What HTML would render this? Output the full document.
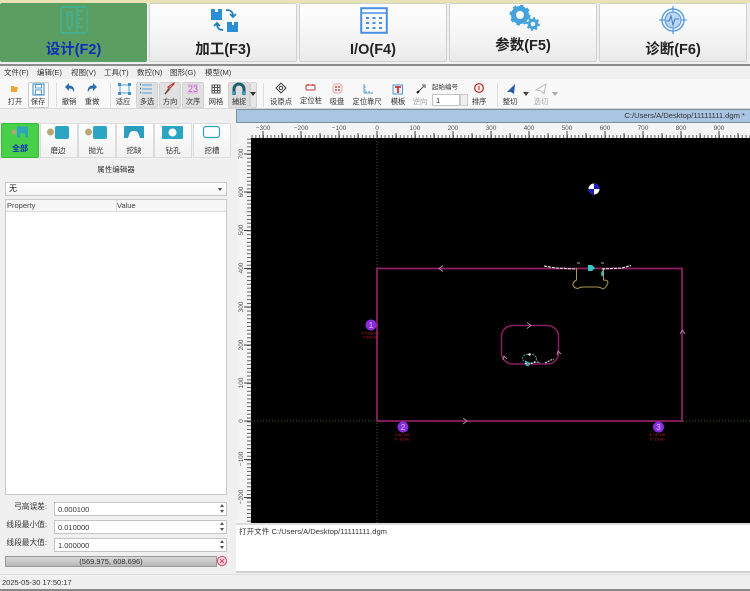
<!DOCTYPE html>
<html><head><meta charset="utf-8">
<style>
html,body{margin:0;padding:0;width:750px;height:591px;overflow:hidden;background:#f0f0f0;font-family:"Liberation Sans","Noto Sans CJK SC",sans-serif;color:#222}
.a{position:absolute;white-space:nowrap}
.tab{position:absolute;top:3px;height:59px;width:148px;background:linear-gradient(#ffffff,#f2f2f2 70%,#e9e9e9);border:1px solid #d0d0d0;box-sizing:border-box;border-radius:2px}
.tl{position:absolute;left:0;right:0;text-align:center;font-size:14.5px;font-weight:bold;color:#222;top:37px;line-height:18px}
.tab svg{position:absolute}
.m{position:absolute;top:67px;font-size:7.5px;line-height:12px;color:#333}
.t{position:absolute;top:96px;font-size:7.3px;line-height:11px;color:#333;text-align:center;transform:translateX(-50%);white-space:nowrap}
.ti{position:absolute}
.b{position:absolute;top:82px;height:26px;background:#e0e0e0;border:1px solid #d2d2d2;box-sizing:border-box;border-radius:2px}
.sb{position:absolute;top:123px;width:38px;height:35px;background:linear-gradient(#fff,#f1f1f1);border:1px solid #dcdcdc;box-sizing:border-box}
.sl{position:absolute;top:145px;font-size:7.5px;line-height:11px;color:#333;transform:translateX(-50%);white-space:nowrap}
.inp{position:absolute;left:54px;width:168px;height:12px;background:#fff;border:1px solid #c4c4c4;font-size:7.5px;line-height:13px;color:#333;padding-left:3px}
.lab{position:absolute;font-size:7.7px;line-height:11px;color:#333;right:703px;white-space:nowrap}
</style></head><body>

<div class="a" style="left:0;top:0;width:750px;height:3px;background:#e8e2b4"></div>
<div class="a" style="left:0;top:3px;width:750px;height:60px;background:#efefef"></div>

<div class="tab" style="left:0;width:147px;background:#5a9e62;border-color:#5a9e62">
 <svg style="left:58px;top:1px" width="30" height="30" viewBox="0 0 30 30" fill="none" stroke="#3fb39a" stroke-width="1.4"><rect x="2" y="2" width="26" height="26" rx="2"/><path d="M8 7h5v13l-2.5 5-2.5-5zM8 10h5M18 2v26M18 6h5M18 10h3M18 14h5M18 18h3M18 22h5"/></svg>
 <div class="tl" style="color:#1030b8">设计(F2)</div></div>
<div class="tab" style="left:149px">
 <svg style="left:60px;top:2px" width="30" height="30" viewBox="0 0 30 30"><path d="M1 3h4v3h3V3h4v11H1z" fill="#2a8fd4"/><path d="M20 16h2v3h2v-3h4v10H17V16z" fill="#2a8fd4"/><path d="M16 4c4 0 7 1 7 6M20 8l3 3 3-3M13 24c-4 0-6-2-6-6M4 20l3-3 3 3" fill="none" stroke="#1e7cb8" stroke-width="1.7"/></svg>
 <div class="tl">加工(F3)</div></div>
<div class="tab" style="left:299px">
 <svg style="left:60px;top:3px" width="28" height="27" viewBox="0 0 28 27" fill="none"><rect x="1.2" y="1.2" width="25.6" height="24.6" stroke="#4a90e2" stroke-width="2"/><path d="M1 6h26" stroke="#4a90e2" stroke-width="1.5"/><path d="M6 10h3v2H6zM12.5 10h3v2h-3zM19 10h3v2h-3zM6 15h3v2H6zM12.5 15h3v2h-3zM19 15h3v2h-3zM6 20h3v2H6zM12.5 20h3v2h-3zM19 20h3v2h-3z" fill="#4a90e2"/></svg>
 <div class="tl">I/O(F4)</div></div>
<div class="tab" style="left:449px">
 <svg style="left:58px;top:1px" width="32" height="26" viewBox="0 0 32 26" fill="none" stroke="#45a2dc"><circle cx="12" cy="10" r="6.5" stroke-width="5"/><circle cx="12" cy="10" r="9" stroke-width="3" stroke-dasharray="3.5 3.5"/><circle cx="25" cy="19" r="3.8" stroke-width="3"/><circle cx="25" cy="19" r="5.8" stroke-width="2" stroke-dasharray="2.2 2.3"/></svg>
 <div class="tl" style="top:33px">参数(F5)</div></div>
<div class="tab" style="left:599px;width:148px">
 <svg style="left:58px;top:1px" width="30" height="30" viewBox="0 0 30 30" fill="none" stroke="#5c9ee0"><circle cx="15" cy="15" r="11" stroke-width="1.5"/><circle cx="15" cy="15" r="8" fill="#b9d6f4" stroke-width="1.2"/><path d="M1 15h6M23 15h6M15 1v6M15 23v6" stroke-width="1.3"/><path d="M8 16h3l2-5 2 9 2-6h4" stroke="#4a82bc" stroke-width="1.1"/></svg>
 <div class="tl">诊断(F6)</div></div>

<div class="a" style="left:0;top:64px;width:750px;height:2px;background:#8c8c8c"></div>
<div class="a" style="left:0;top:66px;width:750px;height:13px;background:#f0f0f0"></div>
<div class="a" style="left:0;top:79px;width:750px;height:30px;background:#f8f8f8"></div>
<div class="a" style="left:0;top:108px;width:750px;height:1px;background:#d8d8d8"></div>

<div class="m" style="left:4px">文件(F)</div><div class="m" style="left:37px">编辑(E)</div><div class="m" style="left:71px">视图(V)</div><div class="m" style="left:104px">工具(T)</div><div class="m" style="left:137px">数控(N)</div><div class="m" style="left:170px">图形(G)</div><div class="m" style="left:205px">模型(M)</div>

<!-- toolbar pressed states -->
<div class="b" style="left:28px;width:21px;background:#fff;border-color:#ccc"></div>
<div class="b" style="left:136px;width:22px"></div>
<div class="b" style="left:159px;width:22px"></div>
<div class="b" style="left:182px;width:22px"></div>
<div class="b" style="left:228px;width:22px;background:#dcdcdc"></div>
<div class="b" style="left:250px;width:7px;background:#e6e6e6"></div>
<div class="a" style="left:250px;top:92px;width:0;height:0;border:3px solid transparent;border-top:4px solid #333"></div>

<svg class="ti" style="left:0;top:80px" width="750" height="16" viewBox="0 0 750 16" fill="none">
 <path d="M11 6h3l1 1h3l-1 5h-6z" fill="#f2a33a"/>
 <rect x="33" y="4" width="11" height="11" stroke="#5a9ad0" stroke-width="1.2"/><rect x="35.5" y="4.5" width="6" height="3.5" stroke="#5a9ad0"/><rect x="35.5" y="10" width="6" height="4.5" stroke="#5a9ad0"/>
 <path d="M65 7l4-4v2.5c4 0 6 3 5 7-1-3-2-4-5-4V11z" fill="#2c6cb0"/>
 <path d="M97 7l-4-4v2.5c-4 0-6 3-5 7 1-3 2-4 5-4V11z" fill="#2c6cb0"/>
 <rect x="120" y="5" width="9" height="8" stroke="#5aa2d4" stroke-width="1"/><path d="M118 3h3v3h-3zM128 3h3v3h-3zM118 12h3v3h-3zM128 12h3v3h-3z" fill="#3f8fc8"/>
 <path d="M142 5h10M142 9h10M142 13h10" stroke="#4aa0dc"/><path d="M140 4.5h1M140 8.5h1M140 12.5h1" stroke="#2a80c0" stroke-width="1.4"/>
 <path d="M165 14l5-5M174 4l-4 4-2-1 6-4z" stroke="#c04040" stroke-width="1.2"/><path d="M165 14l4-6" stroke="#444"/>
 <text x="188" y="12" font-size="9" fill="#d050d0" font-family="Liberation Sans">23</text><path d="M187 5h11M187 13h11" stroke="#e3a0e3"/>
 <path d="M212 5h8v8h-8zM212 7.5h8M212 10.5h8M214.5 5v8M217.5 5v8" stroke="#555" stroke-width="1"/>
 <path d="M234 15V9a5 5 0 0 1 10 0v6" stroke="#1c5f70" stroke-width="3"/><path d="M233 13h3M242 13h3" stroke="#3ba0c0" stroke-width="3"/>
 <path d="M281 3l5 5-5 5-5-5z" stroke="#444"/><circle cx="281" cy="8" r="1.8" stroke="#444"/>
 <rect x="306" y="5" width="9" height="5" rx="1" stroke="#c03838"/><path d="M308 4v2M313 4v2" stroke="#c03838"/>
 <rect x="333" y="4" width="9" height="9" rx="3" stroke="#e8a0a0"/><circle cx="336" cy="7" r="1" fill="#c44"/><circle cx="339" cy="7" r="1" fill="#c44"/><circle cx="336" cy="10" r="1" fill="#c44"/><circle cx="339" cy="10" r="1" fill="#c44"/>
 <path d="M364 4v9h9M366 13v-2M369 13v-2M364 10h2M364 7h2" stroke="#5a9ad0"/>
 <rect x="393" y="5" width="9.5" height="9" stroke="#4a9ac8" fill="#e8f0f8"/><path d="M395 7h6M398 7v6" stroke="#c82020" stroke-width="1.6"/>
 <path d="M417 13l7-7M422 5h3v3" stroke="#555"/><path d="M417 13l2-2" stroke="#222" stroke-width="2"/>
 <circle cx="479" cy="8" r="4.3" stroke="#c81818" stroke-width="1.2"/><path d="M479 6v4" stroke="#c81818"/>
 <path d="M507 12l8-8-1 10-3-2z" fill="#2a5aa8"/>
 <path d="M536 10l10-6-2 10-3-3z" stroke="#bbb"/>
</svg>
<div class="a" style="left:523px;top:92px;width:0;height:0;border:3px solid transparent;border-top:4px solid #444"></div>
<div class="a" style="left:552px;top:92px;width:0;height:0;border:3px solid transparent;border-top:4px solid #aaa"></div>

<div class="t" style="left:15px">打开</div><div class="t" style="left:38px">保存</div><div class="t" style="left:69px">撤销</div><div class="t" style="left:92px">重做</div><div class="t" style="left:123px">适应</div><div class="t" style="left:147px">多选</div><div class="t" style="left:170px">方向</div><div class="t" style="left:193px">次序</div><div class="t" style="left:216px">网格</div><div class="t" style="left:239px">捕捉</div>
<div class="t" style="left:281px">设原点</div><div class="t" style="left:311px;top:95px">定位桩</div><div class="t" style="left:337px">吸盘</div><div class="t" style="left:367px">定位靠尺</div><div class="t" style="left:398px">模板</div><div class="t" style="left:420px;color:#aaa">逆向</div>
<div class="t" style="left:445px;top:82px;font-size:6.5px">起始编号</div>
<div class="a" style="left:432px;top:94px;width:23px;height:10px;background:#fff;border:1px solid #c4c4c4;font-size:7.5px;line-height:11px;padding-left:3px">1</div>
<div class="a" style="left:460px;top:94px;width:8px;height:12px;background:#eee;border:1px solid #ccc;box-sizing:border-box"></div>
<div class="t" style="left:479px">排序</div><div class="t" style="left:510px">整切</div><div class="t" style="left:541px;color:#aaa">选切</div>
<div class="a" style="left:56px;top:83px;width:1px;height:24px;background:#ddd"></div>
<div class="a" style="left:110px;top:83px;width:1px;height:24px;background:#ddd"></div>
<div class="a" style="left:263px;top:83px;width:1px;height:24px;background:#ddd"></div>
<div class="a" style="left:497px;top:83px;width:1px;height:24px;background:#ddd"></div>

<!-- left panel -->
<div class="a" style="left:0;top:109px;width:236px;height:463px;background:#f0f0f0"></div>
<div class="a" style="left:1px;top:123px;width:38px;height:35px;background:#48d048;border:1px solid #38b838;box-sizing:border-box;border-radius:2px"></div>
<div class="sb" style="left:40px"></div><div class="sb" style="left:78px"></div><div class="sb" style="left:116px"></div><div class="sb" style="left:154px"></div><div class="sb" style="left:193px;width:38px"></div>
<svg class="ti" style="left:0;top:124px" width="236" height="20" viewBox="0 0 236 20">
 <circle cx="14" cy="8" r="2.5" fill="#b0a878"/><path d="M17 2.5h11v11h-3v-4h-5v4h-3z" fill="#2ea8b8"/>
 <circle cx="50.5" cy="8" r="3.5" fill="#b8a878"/><rect x="55" y="2" width="14" height="13" rx="2" fill="#2ca4c4"/>
 <circle cx="88.5" cy="8" r="3.5" fill="#b8a878"/><rect x="93" y="2" width="14" height="13" rx="2" fill="#2ca4c4"/>
 <path d="M125 2h18a1 1 0 0 1 1 1v11h-4l-1-3c-1-3-2-4-5-4s-4 1-5 4l-1 3h-4V3a1 1 0 0 1 1-1z" fill="#2c9cc0"/>
 <rect x="162" y="2" width="21" height="13" rx="1" fill="#2ca4c4"/><circle cx="172.5" cy="8.5" r="4" fill="#fff"/>
 <rect x="203.5" y="2.5" width="16" height="11" rx="2.5" fill="none" stroke="#2ca4c4" stroke-width="1.2"/>
</svg>
<div class="sl" style="left:20px;color:#1030b8;font-weight:bold;top:143px;font-size:8px">全部</div><div class="sl" style="left:58px">磨边</div><div class="sl" style="left:96px">抛光</div><div class="sl" style="left:134px">挖缺</div><div class="sl" style="left:173px">钻孔</div><div class="sl" style="left:212px">挖槽</div>

<div class="a" style="left:0;top:164px;width:232px;text-align:center;font-size:7.5px;line-height:11px;color:#333">属性编辑器</div>
<div class="a" style="left:5px;top:182px;width:222px;height:14px;background:linear-gradient(#fff,#f4f4f4);border:1px solid #c8c8c8;box-sizing:border-box;font-size:8px;line-height:12px;padding-left:3px">无</div>
<div class="a" style="left:218px;top:188px;width:0;height:0;border:2.5px solid transparent;border-top:3px solid #444"></div>
<div class="a" style="left:5px;top:199px;width:222px;height:296px;background:#fff;border:1px solid #c8c8c8;box-sizing:border-box"></div>
<div class="a" style="left:6px;top:200px;width:220px;height:12px;background:#f7f7f7;border-bottom:1px solid #ddd;box-sizing:border-box;font-size:7.5px;line-height:12px;color:#444;padding-left:1px">Property</div>
<div class="a" style="left:116px;top:200px;width:1px;height:12px;background:#ddd"></div>
<div class="a" style="left:117px;top:200px;font-size:7.5px;line-height:12px;color:#444">Value</div>

<div class="lab" style="top:500.5px">弓高误差:</div><div class="inp" style="top:502px">0.000100</div>
<div class="lab" style="top:518.5px">线段最小值:</div><div class="inp" style="top:520px">0.010000</div>
<div class="lab" style="top:536.5px">线段最大值:</div><div class="inp" style="top:538px">1.000000</div>
<svg class="ti" style="left:217px;top:502px" width="10" height="52" viewBox="0 0 10 52" fill="#555"><path d="M3 5l2-3 2 3zM3 8h4l-2 3zM3 23l2-3 2 3zM3 26h4l-2 3zM3 41l2-3 2 3zM3 44h4l-2 3z"/></svg>
<div class="a" style="left:5px;top:556px;width:212px;height:11px;background:linear-gradient(#d8d8d8,#b8b8b8);border:1px solid #999;box-sizing:border-box;font-size:7.5px;line-height:10px;text-align:center;color:#333">(569.975, 608.696)</div>
<svg class="ti" style="left:216px;top:555px" width="12" height="12" viewBox="0 0 12 12" fill="#fbd8e2" stroke="#d84868"><circle cx="6" cy="6" r="4.6"/><path d="M4 4l4 4M8 4l-4 4" fill="none"/></svg>

<!-- right header -->
<div class="a" style="left:236px;top:109px;width:514px;height:14px;background:#a9c5e3;border:1px solid #7f8c9c;border-right:none;box-sizing:border-box;font-size:7.6px;line-height:12px;text-align:right;padding-right:5px;color:#333">C:/Users/A/Desktop/11111111.dgm *</div>

<!-- canvas -->
<svg class="a" style="left:237px;top:123px" width="513" height="400" viewBox="237 123 513 400" font-family="Liberation Sans">
 <defs>
  <pattern id="hx" x="263" y="0" width="3.8" height="400" patternUnits="userSpaceOnUse"><rect width="0.9" height="400" fill="#555"/></pattern>
  <pattern id="vy" x="0" y="154" width="400" height="3.82" patternUnits="userSpaceOnUse"><rect width="400" height="0.9" fill="#555"/></pattern>
 </defs>
 <rect x="237" y="123" width="513" height="15" fill="#f4f4f4"/>
 <rect x="237" y="123" width="14" height="400" fill="#f4f4f4"/>
 <rect x="251" y="135" width="499" height="3" fill="url(#hx)"/>
 <rect x="247" y="138" width="4" height="385" fill="url(#vy)"/>
 <path d="M263 131v7M282 133v5M301 131v7M320 133v5M339 131v7M358 133v5M377 131v7M396 133v5M415 131v7M434 133v5M453 131v7M472 133v5M491 131v7M510 133v5M529 131v7M548 133v5M567 131v7M586 133v5M605 131v7M624 133v5M643 131v7M662 133v5M681 131v7M700 133v5M719 131v7M738 133v5" stroke="#444" fill="none"/>
 <path d="M244 154h7M244 192h7M244 230.5h7M244 268.5h7M244 307h7M244 345h7M244 383h7M244 421h7M244 459.5h7M244 497.5h7" stroke="#444" fill="none"/>
 <g font-size="6.5" fill="#555" text-anchor="middle">
  <text x="263" y="130">−300</text><text x="301" y="130">−200</text><text x="339" y="130">−100</text><text x="377" y="130">0</text><text x="415" y="130">100</text><text x="453" y="130">200</text><text x="491" y="130">300</text><text x="529" y="130">400</text><text x="567" y="130">500</text><text x="605" y="130">600</text><text x="643" y="130">700</text><text x="681" y="130">800</text><text x="719" y="130">900</text>
  <text transform="translate(243 154) rotate(-90)">700</text><text transform="translate(243 192) rotate(-90)">600</text><text transform="translate(243 230) rotate(-90)">500</text><text transform="translate(243 268) rotate(-90)">400</text><text transform="translate(243 307) rotate(-90)">300</text><text transform="translate(243 345) rotate(-90)">200</text><text transform="translate(243 383) rotate(-90)">100</text><text transform="translate(243 421) rotate(-90)">0</text><text transform="translate(243 459) rotate(-90)">−100</text><text transform="translate(243 497) rotate(-90)">−200</text>
 </g>
 <rect x="251" y="138" width="499" height="385" fill="#000"/>
 <path d="M377 138V523M251 421H750" stroke="#2a6a2a" stroke-width="1" stroke-dasharray="1 2" fill="none"/>
 <rect x="377" y="268.5" width="305" height="152.5" fill="none" stroke="#8c1f62" stroke-width="1.8"/>
 <rect x="501.5" y="325.5" width="57" height="38.5" rx="11" fill="none" stroke="#8c1f62" stroke-width="1.5"/>
 <g fill="none" stroke="#b08cb0" stroke-width="0.9">
  <path d="M443 265.5l-4 3 4 3M463 418l4 3-4 3M680 334l2.5-4 2.5 4"/>
  <path d="M527 322.5l4 3-4 3M557 355l1-4 3 3M503 360l1-4 3 3"/>
 </g>
 <circle cx="594" cy="189" r="5.5" fill="#fff"/>
 <path d="M594 189V183.5A5.5 5.5 0 0 1 599.5 189ZM594 189V194.5A5.5 5.5 0 0 1 588.5 189Z" fill="#1a1ac0"/>
 <path d="M576.5 268V280q-4 2-3.5 5t5 3.5q2-1.5 5-1.5h14q3 0 5 1.5t5-3.5-3.5-5V268" fill="none" stroke="#a89c50" stroke-width="1"/>
 <path d="M544 266l12 2 20 1M602 269l20-1 9-2.500" stroke="#ddd" stroke-width="1.2" stroke-dasharray="3 1" fill="none"/>
 <path d="M588 265h4l3 3-3 3h-4zM602 270l2 3-2 4-1-3z" fill="#38c8c8"/>
 <path d="M577 263h3M601 263h3" stroke="#aaa" fill="none"/>
 <ellipse cx="529.5" cy="358.5" rx="7" ry="4.5" fill="none" stroke="#5ac8c8" stroke-width="0.8" stroke-dasharray="2 1"/>
 <circle cx="529.5" cy="354.5" r="1.2" fill="#fff"/>
 <path d="M525 363q4 2 8 0t7 0M545 363l6-3 3-1" fill="none" stroke="#ddd" stroke-width="1.1" stroke-dasharray="2 1"/>
 <path d="M525 361l4 2-3 2 3 1" fill="none" stroke="#38c8c8" stroke-width="1"/>
 <g fill="#8a2be2"><circle cx="371" cy="325" r="5.5"/><circle cx="403" cy="427" r="5.5"/><circle cx="658.5" cy="427" r="5.5"/></g>
 <g font-size="8" fill="#d8c8f8" text-anchor="middle"><text x="371" y="328">1</text><text x="403" y="430">2</text><text x="658.5" y="430">3</text></g>
 <g font-size="4" fill="#c82020" text-anchor="middle"><text x="370.5" y="334.5">X:0.00 Y:0</text><text x="370.5" y="338.5">Y:300.00</text><text x="402" y="436">X:67.00</text><text x="402" y="440.5">Y:-10.00</text><text x="657" y="436">X:737.00</text><text x="657" y="440.5">Y:-10.00</text></g>
</svg>

<!-- log -->
<div class="a" style="left:236px;top:523px;width:514px;height:50px;background:#fff;border-top:2px solid #dcdcdc;border-bottom:2px solid #d0d0d0;box-sizing:border-box;font-size:7.6px;line-height:12px;padding:1px 3px;color:#333">打开文件 C:/Users/A/Desktop/11111111.dgm</div>

<!-- status -->
<div class="a" style="left:0;top:574px;width:750px;height:15px;background:#f0f0f0;border-top:1px solid #ddd;box-sizing:border-box;font-size:7.5px;line-height:15px;padding-left:2px;color:#333">2025-05-30 17:50:17</div>
<div class="a" style="left:0;top:589px;width:750px;height:2px;background:#888"></div>
</body></html>
